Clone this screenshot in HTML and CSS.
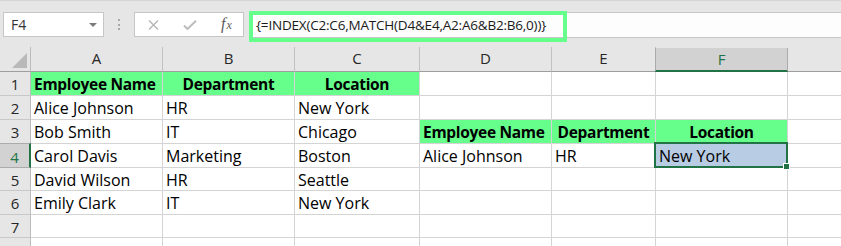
FILE: index.html
```html
<!DOCTYPE html>
<html>
<head>
<meta charset="utf-8">
<link rel="stylesheet" href="styles.css">
</head>
<body>
<div class="app">
  <div class="topbar">
    <div class="namebox">
      <span class="nb-text">F4</span>
      <span class="nb-arrow"></span>
    </div>
    <div class="sep"><span></span><span></span><span></span></div>
    <div class="btnbox">
      <svg class="ico-x" width="11" height="10" viewBox="0 0 11 10"><path d="M1 0.5 L10 9.5 M10 0.5 L1 9.5" stroke="#b4b4b4" stroke-width="1.3" fill="none"/></svg>
      <svg class="ico-ok" width="14" height="10" viewBox="0 0 14 10"><path d="M1 5.5 L4.5 9 L13 0.8" stroke="#bdbdbd" stroke-width="2" fill="none"/></svg>
      <span class="ico-fx"><i class="f">f</i><i class="x">x</i></span>
    </div>
    <div class="formula">
      <div class="fx-box"></div>
      <span class="ftext">{=INDEX(C2:C6,MATCH(D4&amp;E4,A2:A6&amp;B2:B6,0))}</span>
    </div>
  </div>
  <div class="grid">
    <div class="corner"><span class="tri"></span></div>
    <div class="ch">A</div>
    <div class="ch">B</div>
    <div class="ch">C</div>
    <div class="ch">D</div>
    <div class="ch">E</div>
    <div class="ch chsel">F</div>
    <div class="ch chlast"></div>

    <div class="rh">1</div>
    <div class="cell g b">Employee Name</div>
    <div class="cell g b c">Department</div>
    <div class="cell g b c">Location</div>
    <div class="cell"></div><div class="cell"></div><div class="cell"></div><div class="cell"></div>

    <div class="rh">2</div>
    <div class="cell">Alice Johnson</div>
    <div class="cell">HR</div>
    <div class="cell">New York</div>
    <div class="cell"></div><div class="cell"></div><div class="cell"></div><div class="cell"></div>

    <div class="rh">3</div>
    <div class="cell">Bob Smith</div>
    <div class="cell">IT</div>
    <div class="cell">Chicago</div>
    <div class="cell g b">Employee Name</div>
    <div class="cell g b c">Department</div>
    <div class="cell g b c">Location</div>
    <div class="cell"></div>

    <div class="rh rhsel">4</div>
    <div class="cell">Carol Davis</div>
    <div class="cell">Marketing</div>
    <div class="cell">Boston</div>
    <div class="cell">Alice Johnson</div>
    <div class="cell">HR</div>
    <div class="cell active">New York<span class="selbox"><span class="handle"></span></span></div>
    <div class="cell"></div>

    <div class="rh">5</div>
    <div class="cell">David Wilson</div>
    <div class="cell">HR</div>
    <div class="cell">Seattle</div>
    <div class="cell"></div><div class="cell"></div><div class="cell"></div><div class="cell"></div>

    <div class="rh">6</div>
    <div class="cell">Emily Clark</div>
    <div class="cell">IT</div>
    <div class="cell">New York</div>
    <div class="cell"></div><div class="cell"></div><div class="cell"></div><div class="cell"></div>

    <div class="rh">7</div>
    <div class="cell"></div><div class="cell"></div><div class="cell"></div>
    <div class="cell"></div><div class="cell"></div><div class="cell"></div><div class="cell"></div>

    <div class="rh"></div>
    <div class="cell"></div><div class="cell"></div><div class="cell"></div>
    <div class="cell"></div><div class="cell"></div><div class="cell"></div><div class="cell"></div>
  </div>
</div>
</body>
</html>
```
FILE: styles.css
```css
html, body {
  margin: 0;
  padding: 0;
  background: #ffffff;
}
.app {
  width: 841px;
  height: 246px;
  overflow: hidden;
  font-family: "Open Sans", "Noto Sans", sans-serif;
  background: #e6e6e6;
}
.topbar {
  height: 47px;
  box-sizing: border-box;
  border-top: 1px solid #d6d6d6;
  display: flex;
  align-items: flex-start;
  padding-top: 11px;
  padding-left: 3px;
}
.namebox {
  width: 101px;
  height: 25px;
  box-sizing: border-box;
  background: #ffffff;
  border: 1px solid #c6c6c6;
  display: flex;
  align-items: center;
  justify-content: space-between;
  padding: 0 6px 0 7px;
}
.nb-text {
  font-size: 14px;
  color: #333333;
  line-height: 20px;
}
.nb-arrow {
  width: 0;
  height: 0;
  border-left: 4px solid transparent;
  border-right: 4px solid transparent;
  border-top: 4px solid #7a7a7a;
}
.sep {
  width: 30px;
  height: 25px;
  display: flex;
  flex-direction: column;
  align-items: center;
  justify-content: center;
  gap: 2.5px;
}
.sep span {
  width: 2px;
  height: 2px;
  background: #a8a8a8;
}
.btnbox {
  width: 110px;
  height: 25px;
  box-sizing: border-box;
  background: #ffffff;
  border: 1px solid #c6c6c6;
  display: flex;
  align-items: center;
  padding-left: 13px;
}
.ico-x { margin-right: 24px; }
.ico-ok { margin-right: 24px; }
.ico-fx {
  font-family: "Liberation Serif", "DejaVu Serif", serif;
  color: #5a5a5a;
  line-height: 20px;
}
.ico-fx .f { font-size: 16px; }
.ico-fx .x { font-size: 12px; margin-left: 1px; }
.formula {
  position: relative;
  flex: 1;
  margin-left: 5px;
  height: 26px;
  box-sizing: border-box;
  background: #fdfdfd;
  border-top: 1px solid #c6c6c6;
  border-bottom: 1px solid #c6c6c6;
  display: flex;
  align-items: center;
  padding-left: 7px;
}
.ftext {
  font-size: 13.5px;
  letter-spacing: -0.2px;
  color: #1a1a1a;
  white-space: nowrap;
  line-height: 20px;
}
.fx-box {
  position: absolute;
  left: 0;
  top: -2px;
  width: 318px;
  height: 31px;
  box-sizing: border-box;
  border: 4px solid #66ff8c;
}
.grid {
  display: grid;
  grid-template-columns: 31px 132px 132px 125px 132px 104px 132px 54px;
  grid-template-rows: 25px 24px 24px 24px 24px 23px 24px 23px 20px;
}
.corner, .ch, .rh, .cell {
  box-sizing: border-box;
  white-space: nowrap;
  overflow: hidden;
}
.corner {
  background: #e6e6e6;
  border-right: 1px solid #bcbcbc;
  border-bottom: 1px solid #9e9e9e;
  position: relative;
}
.tri {
  position: absolute;
  right: 3px;
  bottom: 3px;
  width: 0;
  height: 0;
  border-left: 15px solid transparent;
  border-bottom: 15px solid #b9b9b9;
}
.ch {
  background: #e6e6e6;
  border-right: 1px solid #c2c2c2;
  border-bottom: 1px solid #9e9e9e;
  text-align: center;
  font-size: 15px;
  line-height: 20px;
  padding-top: 1px;
  color: #262626;
}
.chsel {
  background: #d2d2d2;
  color: #217346;
  border-left: 1px solid #ababab;
  border-right: 1px solid #ababab;
  border-bottom: 2px solid #217346;
  margin-left: -1px;
  margin-top: 1px;
}
.chlast { border-right: none; }
.rh {
  background: #e6e6e6;
  border-right: 1px solid #bcbcbc;
  border-bottom: 1px solid #c8c8c8;
  text-align: center;
  font-size: 15px;
  line-height: 20px;
  padding-top: 2px;
  color: #262626;
}
.rhsel {
  background: #d2d2d2;
  color: #217346;
  border-right: 2px solid #217346;
  border-bottom-color: #ababab;
  border-top: 1px solid #ababab;
  margin-top: -1px;
  padding-top: 3px;
}
.cell {
  background: #ffffff;
  border-right: 1px solid #d4d4d4;
  border-bottom: 1px solid #d4d4d4;
  font-size: 16px;
  line-height: 20px;
  padding: 1.5px 3px 0 3px;
  color: #000000;
}
.g { background: #66ff8c; }
.b { font-weight: 700; font-size: 15.5px; letter-spacing: -0.3px; }
.c { text-align: center; }
.active {
  background: #b8cce4;
  position: relative;
  overflow: visible;
}
.selbox {
  position: absolute;
  left: -2px;
  top: -2px;
  right: -1px;
  bottom: -1px;
  border: 2px solid #217346;
}
.handle {
  position: absolute;
  right: -4px;
  bottom: -4px;
  width: 5px;
  height: 5px;
  background: #217346;
  border: 1px solid #ffffff;
}
```
